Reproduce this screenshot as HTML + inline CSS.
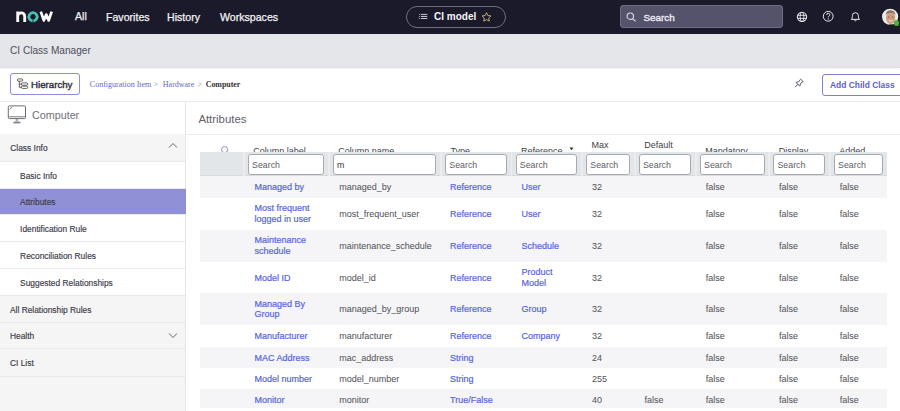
<!DOCTYPE html>
<html><head><meta charset="utf-8">
<style>
*{margin:0;padding:0;box-sizing:border-box}
html,body{width:900px;height:411px;overflow:hidden;background:#fff;font-family:"Liberation Sans",sans-serif;position:relative}
.a{position:absolute;white-space:nowrap;line-height:1}
#top{position:absolute;left:0;top:0;width:900px;height:34px;background:#1b1a2a}
#hdr{position:absolute;left:0;top:34px;width:900px;height:33.5px;background:#e5e6ea;border-bottom:1.2px solid #dfe0e4;box-shadow:0 1px 1.5px rgba(0,0,0,0.05);z-index:1}
#tb{position:absolute;left:0;top:67.5px;width:900px;height:33.5px;background:#fff}
.nav{color:#f2f2f5;font-size:10.6px;font-weight:normal;-webkit-text-stroke:0.25px #f2f2f5}
#side{position:absolute;left:0;top:101px;width:186px;height:310px;background:#f5f5f5;border-right:1px solid #e8e8ea}
.si{position:absolute;left:0;width:185px;border-bottom:1px solid #e6e6e8;color:#3c3c48;font-size:8.3px}
.si span{position:absolute;left:10px;line-height:1}
.sub span{left:20px}
.w{background:#fff}
.sel{background:#8f90d5}
</style></head><body>
<div id="top">
  <!-- now logo -->
  <svg class="a" style="left:0;top:0" width="60" height="34" viewBox="0 0 60 34">
    <path d="M17.7 22.1V11.6M17.7 16.3A3.5 3.5 0 0 1 24.7 16.3V22.1" fill="none" stroke="#fff" stroke-width="2.8"/>
    <path d="M32.6 21A4.15 4.15 0 1 1 33.4 21" fill="none" stroke="#47c1b1" stroke-width="2.8"/>
    <path d="M40.8 11.6L43.8 20.4L46.25 14.6L48.7 20.4L51.7 11.6" fill="none" stroke="#fff" stroke-width="2.7" stroke-linejoin="round"/>
  </svg>
  <div class="a nav" style="left:75px;top:11.4px">All</div>
  <div class="a nav" style="left:106px;top:11.6px">Favorites</div>
  <div class="a nav" style="left:167px;top:11.6px">History</div>
  <div class="a nav" style="left:220px;top:11.6px">Workspaces</div>
  <div class="a" style="left:406px;top:6px;width:100px;height:22px;border:1px solid #6f6d7e;border-radius:11px"></div>
  <svg class="a" style="left:418px;top:13px" width="10" height="7" viewBox="0 0 10 7"><path d="M0.9 1.4h1.3M0.9 3.45h1.3M0.9 5.5h1.3" stroke="#a9a9b4" stroke-width="0.95"/><path d="M3 1.4h6.3M3 3.45h6.3M3 5.5h6.3" stroke="#d4d4dc" stroke-width="0.95"/></svg>
  <div class="a" style="left:434px;top:11.5px;font-size:10px;font-weight:bold;color:#f4f4f8">CI model</div>
  <svg class="a" style="left:481px;top:12px" width="11" height="10" viewBox="0 0 24 23"><path d="M12 1.5l3.1 6.6 7.2.9-5.3 4.9 1.4 7.1L12 17.5l-6.4 3.5 1.4-7.1L1.7 9l7.2-.9z" fill="none" stroke="#c8b07a" stroke-width="2.2" stroke-linejoin="round"/></svg>
  <div class="a" style="left:620px;top:5px;width:163px;height:23px;background:#55526c;border:1px solid #6f6c86;border-radius:3px"></div>
  <svg class="a" style="left:626px;top:12px" width="11" height="10" viewBox="0 0 11 10"><circle cx="4.3" cy="4.2" r="3.2" fill="none" stroke="#dcdbe6" stroke-width="1.1"/><path d="M6.6 6.6L9.6 9.4" stroke="#dcdbe6" stroke-width="1.2"/></svg>
  <div class="a" style="left:643.5px;top:12.9px;font-size:9.9px;color:#eeedf5;-webkit-text-stroke:0.35px #eeedf5">Search</div>
  <!-- globe -->
  <svg class="a" style="left:796px;top:11px" width="12" height="12" viewBox="0 0 12 12"><circle cx="6" cy="5.85" r="4.6" fill="none" stroke="#e8e8ec" stroke-width="1.1"/><ellipse cx="6" cy="5.85" rx="1.9" ry="4.6" fill="none" stroke="#e8e8ec" stroke-width="0.9"/><path d="M1.6 4.3h8.8M1.6 7.4h8.8" stroke="#e8e8ec" stroke-width="0.9"/></svg>
  <svg class="a" style="left:822px;top:10px" width="12" height="12" viewBox="0 0 12 12"><circle cx="6.2" cy="6.3" r="4.9" fill="none" stroke="#e8e8ec" stroke-width="1"/><path d="M4.6 5Q4.6 3.4 6.2 3.4Q7.8 3.4 7.8 4.8Q7.8 5.7 7 6.1Q6.2 6.5 6.2 7.4" fill="none" stroke="#e8e8ec" stroke-width="0.95"/><circle cx="6.2" cy="8.9" r="0.6" fill="#e8e8ec"/></svg>
  <svg class="a" style="left:850px;top:10.8px" width="11" height="11" viewBox="0 0 11 11"><path d="M1.3 8.4Q2.4 7.5 2.4 5.6V4.7Q2.4 1.7 5.4 1.7Q8.4 1.7 8.4 4.7V5.6Q8.4 7.5 9.5 8.4Z" fill="none" stroke="#e8e8ec" stroke-width="1" stroke-linejoin="round"/><path d="M4.4 9.3Q5.4 10.5 6.4 9.3" fill="none" stroke="#e8e8ec" stroke-width="1"/></svg>
  <svg class="a" style="left:881px;top:8px" width="19" height="19" viewBox="0 0 19 19"><defs><clipPath id="avc"><circle cx="9.1" cy="8.8" r="8.1"/></clipPath></defs><circle cx="9.1" cy="8.8" r="8.1" fill="#eeeae8"/><g clip-path="url(#avc)"><ellipse cx="9.6" cy="10" rx="4.6" ry="6" fill="#cf9d84"/><path d="M4.6 7.5Q4.8 2.2 9.8 2.2Q14.6 2.4 14.4 7.6Q13.6 5 9.6 4.8Q5.8 5 4.6 7.5Z" fill="#8d735f"/><path d="M6.5 17.5Q9.6 14.8 13.5 16.6L14 19H6Z" fill="#3a3a40"/><ellipse cx="7.8" cy="9" rx="0.7" ry="0.5" fill="#6a4a3a"/><ellipse cx="11.6" cy="9" rx="0.7" ry="0.5" fill="#6a4a3a"/><path d="M7.6 12.4Q9.6 13.8 11.8 12.4" fill="none" stroke="#f4eeea" stroke-width="0.9"/></g></svg>
  <div class="a" style="left:893.6px;top:20.2px;width:5.6px;height:5.6px;border-radius:50%;background:#4cb52a"></div>
</div>
<div id="hdr"><div class="a" style="left:10px;top:12.2px;font-size:10.1px;color:#4c4f5a">CI Class Manager</div></div>
<div id="tb"></div>
<div class="a" style="left:185px;top:101px;width:1px;height:310px;background:#e6e6e9"></div>
<div class="a" style="left:0;top:101px;width:185px;height:310px;background:#f5f5f5"></div>
<div class="a" style="left:10.4px;top:73.3px;width:69.8px;height:21.4px;border:1px solid #8d8ddc;border-radius:3px;background:#fff"></div>
<svg class="a" style="left:16px;top:78px" width="13" height="11" viewBox="0 0 13 11"><rect x="1.4" y="0.9" width="5.4" height="2.3" rx="1.15" fill="none" stroke="#3a3a3a" stroke-width="0.8"/><path d="M3.3 3.2V9.3M3.3 6.1H5.3M3.3 9.3H5.3" fill="none" stroke="#3a3a3a" stroke-width="0.8"/><rect x="5.3" y="4.9" width="6.5" height="2.3" rx="1.15" fill="none" stroke="#3a3a3a" stroke-width="0.8"/><rect x="5.3" y="8.1" width="6.5" height="2.3" rx="1.15" fill="none" stroke="#3a3a3a" stroke-width="0.8"/></svg>
<div class="a" style="left:31px;top:79.69px;font-size:9.7px;color:#30303c;-webkit-text-stroke:0.4px #30303c;">Hierarchy</div>
<div class="a" style="left:89.8px;top:81.30px;font-size:8.0px;color:#6566c6;font-family:'Liberation Serif',serif;">Configuration Item</div>
<div class="a" style="left:153.5px;top:81.30px;font-size:8.0px;color:#8a8a8a;font-family:'Liberation Serif',serif;">&gt;</div>
<div class="a" style="left:162.8px;top:81.30px;font-size:8.0px;color:#6566c6;font-family:'Liberation Serif',serif;">Hardware</div>
<div class="a" style="left:197.5px;top:81.30px;font-size:8.0px;color:#8a8a8a;font-family:'Liberation Serif',serif;">&gt;</div>
<div class="a" style="left:205.7px;top:81.38px;font-size:7.9px;color:#333;font-family:'Liberation Serif',serif;font-weight:bold;">Computer</div>
<svg class="a" style="left:788px;top:74px" width="22" height="18" viewBox="0 0 22 18"><g transform="translate(10.7 9.5) rotate(45) scale(0.86)"><path d="M-1.6 -5.2L1.6 -5.2Q2.1 -5.2 2 -4.7L1.4 -1.3L2.9 0.7Q3.2 1.4 2.5 1.4L-2.5 1.4Q-3.2 1.4 -2.9 0.7L-1.4 -1.3L-2 -4.7Q-2.1 -5.2 -1.6 -5.2Z" fill="none" stroke="#4a4a5a" stroke-width="1" stroke-linejoin="round"/><path d="M0 1.4V5.6" stroke="#4a4a5a" stroke-width="1" stroke-linecap="round"/></g></svg>
<div class="a" style="left:822.4px;top:74px;width:100px;height:21.7px;border:1px solid #8080d8;border-radius:3px;background:#fff"></div>
<div class="a" style="left:830px;top:80.85px;font-size:8.45px;color:#5f60c8;font-weight:bold;">Add Child Class</div>
<div class="a" style="left:0;top:101px;width:185px;height:33.5px;background:#fff;border-bottom:1px solid #e6e6e9"></div>
<svg class="a" style="left:0;top:98px" width="30" height="30" viewBox="0 0 30 30"><rect x="8.3" y="7.9" width="17.2" height="12.7" rx="1" fill="none" stroke="#6e6e76" stroke-width="1"/><path d="M8.3 18.8H25.5" stroke="#6e6e76" stroke-width="0.9"/><path d="M9.6 11.4L12.4 8.8" stroke="#6e6e76" stroke-width="0.9"/><path d="M15.6 20.6H18.2V23.4H15.6Z" fill="#6e6e76" opacity="0.55"/><path d="M13.4 23.6H20.4V25.4H13.4Z" fill="#6e6e76" opacity="0.85"/></svg>
<div class="a" style="left:32px;top:110.20px;font-size:10.75px;color:#707078;">Computer</div>
<div class="a" style="left:0;top:134px;width:185px;height:28px;background:#f5f5f5;border-bottom:1px solid #e9e9ec"></div>
<div class="a" style="left:10.3px;top:144.29px;font-size:8.4px;color:#3a3a48;-webkit-text-stroke:0.15px #3a3a48">Class Info</div>
<svg class="a" style="left:168px;top:142.0px" width="10" height="7" viewBox="0 0 10 7"><path d="M1 5.5L5 1.5L9 5.5" fill="none" stroke="#555" stroke-width="0.9"/></svg>
<div class="a" style="left:0;top:162px;width:185px;height:27px;background:#fff;border-bottom:1px solid #e9e9ec"></div>
<div class="a" style="left:20.1px;top:171.79px;font-size:8.4px;color:#3a3a48;-webkit-text-stroke:0.15px #3a3a48">Basic Info</div>
<div class="a" style="left:0;top:189px;width:186px;height:26px;background:#8f90d5;border-bottom:1px solid #e9e9ec"></div>
<div class="a" style="left:20.1px;top:198.29px;font-size:8.4px;color:#3a3a48;-webkit-text-stroke:0.15px #3a3a48">Attributes</div>
<div class="a" style="left:0;top:215px;width:185px;height:27px;background:#fff;border-bottom:1px solid #e9e9ec"></div>
<div class="a" style="left:20.1px;top:224.79px;font-size:8.4px;color:#3a3a48;-webkit-text-stroke:0.15px #3a3a48">Identification Rule</div>
<div class="a" style="left:0;top:242px;width:185px;height:27px;background:#fff;border-bottom:1px solid #e9e9ec"></div>
<div class="a" style="left:20.1px;top:251.79px;font-size:8.4px;color:#3a3a48;-webkit-text-stroke:0.15px #3a3a48">Reconciliation Rules</div>
<div class="a" style="left:0;top:269px;width:185px;height:27px;background:#fff;border-bottom:1px solid #e9e9ec"></div>
<div class="a" style="left:20.1px;top:278.79px;font-size:8.4px;color:#3a3a48;-webkit-text-stroke:0.15px #3a3a48">Suggested Relationships</div>
<div class="a" style="left:0;top:296px;width:185px;height:26.5px;background:#f5f5f5;border-bottom:1px solid #e9e9ec"></div>
<div class="a" style="left:10px;top:305.54px;font-size:8.4px;color:#3a3a48;-webkit-text-stroke:0.15px #3a3a48">All Relationship Rules</div>
<div class="a" style="left:0;top:322.5px;width:185px;height:26.80000000000001px;background:#f5f5f5;border-bottom:1px solid #e9e9ec"></div>
<div class="a" style="left:10px;top:332.19px;font-size:8.4px;color:#3a3a48;-webkit-text-stroke:0.15px #3a3a48">Health</div>
<svg class="a" style="left:168px;top:331.9px" width="10" height="7" viewBox="0 0 10 7"><path d="M1 1.5L5 5.5L9 1.5" fill="none" stroke="#555" stroke-width="0.9"/></svg>
<div class="a" style="left:0;top:349.3px;width:185px;height:27.69999999999999px;background:#f5f5f5;border-bottom:1px solid #e9e9ec"></div>
<div class="a" style="left:10px;top:359.44px;font-size:8.4px;color:#3a3a48;-webkit-text-stroke:0.15px #3a3a48">CI List</div>
<div class="a" style="left:186px;top:134px;width:714px;height:1px;background:#ebebed"></div>
<div class="a" style="left:198.4px;top:113.58px;font-size:11.36px;color:#606068;">Attributes</div>
<div class="a" style="left:253.3px;top:146.98px;font-size:9px;color:#3f3f48;">Column label</div>
<div class="a" style="left:338.3px;top:146.98px;font-size:9px;color:#3f3f48;">Column name</div>
<div class="a" style="left:450.5px;top:146.98px;font-size:9px;color:#3f3f48;">Type</div>
<div class="a" style="left:521.0px;top:146.98px;font-size:9px;color:#3f3f48;">Reference</div>
<div class="a" style="left:591.5px;top:140.68px;font-size:9px;color:#3f3f48;">Max</div>
<div class="a" style="left:644.1999999999999px;top:140.68px;font-size:9px;color:#3f3f48;">Default</div>
<div class="a" style="left:705.3px;top:146.98px;font-size:9px;color:#3f3f48;">Mandatory</div>
<div class="a" style="left:778.6999999999999px;top:146.98px;font-size:9px;color:#3f3f48;">Display</div>
<div class="a" style="left:839.3px;top:146.98px;font-size:9px;color:#3f3f48;">Added</div>
<svg class="a" style="left:568.5px;top:147px" width="5" height="4" viewBox="0 0 5 4"><path d="M0.5 0.5H4.5L2.5 3.2Z" fill="#333"/></svg>
<svg class="a" style="left:219.5px;top:144.5px" width="10" height="10" viewBox="0 0 10 10"><circle cx="4.6" cy="4.6" r="3.1" fill="none" stroke="#7d78d6" stroke-width="0.85"/><path d="M6.9 6.9L9 9" stroke="#7d78d6" stroke-width="0.9"/></svg>
<div class="a" style="left:200px;top:151.9px;width:687.2px;height:24.4px;background:#e3e6e9;border-bottom:1px solid #d9dcdf"></div>
<div class="a" style="left:242.9px;top:151.9px;width:1.8px;height:24.4px;background:#eaecef"></div>
<div class="a" style="left:327.9px;top:151.9px;width:1.8px;height:24.4px;background:#eaecef"></div>
<div class="a" style="left:440.09999999999997px;top:151.9px;width:1.8px;height:24.4px;background:#eaecef"></div>
<div class="a" style="left:510.59999999999997px;top:151.9px;width:1.8px;height:24.4px;background:#eaecef"></div>
<div class="a" style="left:581.1px;top:151.9px;width:1.8px;height:24.4px;background:#eaecef"></div>
<div class="a" style="left:633.8px;top:151.9px;width:1.8px;height:24.4px;background:#eaecef"></div>
<div class="a" style="left:694.9px;top:151.9px;width:1.8px;height:24.4px;background:#eaecef"></div>
<div class="a" style="left:768.3px;top:151.9px;width:1.8px;height:24.4px;background:#eaecef"></div>
<div class="a" style="left:828.9px;top:151.9px;width:1.8px;height:24.4px;background:#eaecef"></div>
<div class="a" style="left:247.90px;top:153.6px;width:76.30px;height:21px;background:#fff;border:1.3px solid #a6a9ae;border-radius:2.8px"></div>
<div class="a" style="left:252.1px;top:160.55px;font-size:8.8px;color:#5e5e64;">Search</div>
<div class="a" style="left:332.90px;top:153.6px;width:103.50px;height:21px;background:#fff;border:1.3px solid #a6a9ae;border-radius:2.8px"></div>
<div class="a" style="left:337.09999999999997px;top:160.55px;font-size:8.8px;color:#333;">m</div>
<div class="a" style="left:445.10px;top:153.6px;width:61.80px;height:21px;background:#fff;border:1.3px solid #a6a9ae;border-radius:2.8px"></div>
<div class="a" style="left:449.29999999999995px;top:160.55px;font-size:8.8px;color:#5e5e64;">Search</div>
<div class="a" style="left:515.60px;top:153.6px;width:61.80px;height:21px;background:#fff;border:1.3px solid #a6a9ae;border-radius:2.8px"></div>
<div class="a" style="left:519.8px;top:160.55px;font-size:8.8px;color:#5e5e64;">Search</div>
<div class="a" style="left:586.10px;top:153.6px;width:44.00px;height:21px;background:#fff;border:1.3px solid #a6a9ae;border-radius:2.8px"></div>
<div class="a" style="left:590.3000000000001px;top:160.55px;font-size:8.8px;color:#5e5e64;">Search</div>
<div class="a" style="left:638.80px;top:153.6px;width:52.40px;height:21px;background:#fff;border:1.3px solid #a6a9ae;border-radius:2.8px"></div>
<div class="a" style="left:643.0px;top:160.55px;font-size:8.8px;color:#5e5e64;">Search</div>
<div class="a" style="left:699.90px;top:153.6px;width:64.70px;height:21px;background:#fff;border:1.3px solid #a6a9ae;border-radius:2.8px"></div>
<div class="a" style="left:704.1px;top:160.55px;font-size:8.8px;color:#5e5e64;">Search</div>
<div class="a" style="left:773.30px;top:153.6px;width:51.90px;height:21px;background:#fff;border:1.3px solid #a6a9ae;border-radius:2.8px"></div>
<div class="a" style="left:777.5px;top:160.55px;font-size:8.8px;color:#5e5e64;">Search</div>
<div class="a" style="left:833.90px;top:153.6px;width:49.00px;height:21px;background:#fff;border:1.3px solid #a6a9ae;border-radius:2.8px"></div>
<div class="a" style="left:838.1px;top:160.55px;font-size:8.8px;color:#5e5e64;">Search</div>
<div class="a" style="left:200px;top:176.3px;width:687.2px;height:22.00px;background:#f5f5f7"></div>
<div class="a" style="left:254.4px;top:183.38px;font-size:9px;color:#5865dd;-webkit-text-stroke:0.2px #5865dd;">Managed by</div>
<div class="a" style="left:339.3px;top:183.38px;font-size:9px;color:#55555c;-webkit-text-stroke:0.05px #555;">managed_by</div>
<div class="a" style="left:450.09999999999997px;top:183.38px;font-size:9px;color:#5865dd;-webkit-text-stroke:0.2px #5865dd;">Reference</div>
<div class="a" style="left:521.4px;top:183.38px;font-size:9px;color:#5865dd;-webkit-text-stroke:0.2px #5865dd;">User</div>
<div class="a" style="left:591.9000000000001px;top:183.38px;font-size:9px;color:#55555c;-webkit-text-stroke:0.05px #555;">32</div>
<div class="a" style="left:705.7px;top:183.38px;font-size:9px;color:#55555c;-webkit-text-stroke:0.05px #555;">false</div>
<div class="a" style="left:779.1px;top:183.38px;font-size:9px;color:#55555c;-webkit-text-stroke:0.05px #555;">false</div>
<div class="a" style="left:839.7px;top:183.38px;font-size:9px;color:#55555c;-webkit-text-stroke:0.05px #555;">false</div>
<div class="a" style="left:254.4px;top:204.33px;font-size:9px;color:#5865dd;-webkit-text-stroke:0.2px #5865dd;">Most frequent</div>
<div class="a" style="left:254.4px;top:215.13px;font-size:9px;color:#5865dd;-webkit-text-stroke:0.2px #5865dd;">logged in user</div>
<div class="a" style="left:339.3px;top:210.03px;font-size:9px;color:#55555c;-webkit-text-stroke:0.05px #555;">most_frequent_user</div>
<div class="a" style="left:450.09999999999997px;top:210.03px;font-size:9px;color:#5865dd;-webkit-text-stroke:0.2px #5865dd;">Reference</div>
<div class="a" style="left:521.4px;top:210.03px;font-size:9px;color:#5865dd;-webkit-text-stroke:0.2px #5865dd;">User</div>
<div class="a" style="left:591.9000000000001px;top:210.03px;font-size:9px;color:#55555c;-webkit-text-stroke:0.05px #555;">32</div>
<div class="a" style="left:705.7px;top:210.03px;font-size:9px;color:#55555c;-webkit-text-stroke:0.05px #555;">false</div>
<div class="a" style="left:779.1px;top:210.03px;font-size:9px;color:#55555c;-webkit-text-stroke:0.05px #555;">false</div>
<div class="a" style="left:839.7px;top:210.03px;font-size:9px;color:#55555c;-webkit-text-stroke:0.05px #555;">false</div>
<div class="a" style="left:200px;top:229.6px;width:687.2px;height:32.20px;background:#f5f5f7"></div>
<div class="a" style="left:254.4px;top:236.08px;font-size:9px;color:#5865dd;-webkit-text-stroke:0.2px #5865dd;">Maintenance</div>
<div class="a" style="left:254.4px;top:246.88px;font-size:9px;color:#5865dd;-webkit-text-stroke:0.2px #5865dd;">schedule</div>
<div class="a" style="left:339.3px;top:241.78px;font-size:9px;color:#55555c;-webkit-text-stroke:0.05px #555;">maintenance_schedule</div>
<div class="a" style="left:450.09999999999997px;top:241.78px;font-size:9px;color:#5865dd;-webkit-text-stroke:0.2px #5865dd;">Reference</div>
<div class="a" style="left:521.4px;top:241.78px;font-size:9px;color:#5865dd;-webkit-text-stroke:0.2px #5865dd;">Schedule</div>
<div class="a" style="left:591.9000000000001px;top:241.78px;font-size:9px;color:#55555c;-webkit-text-stroke:0.05px #555;">32</div>
<div class="a" style="left:705.7px;top:241.78px;font-size:9px;color:#55555c;-webkit-text-stroke:0.05px #555;">false</div>
<div class="a" style="left:779.1px;top:241.78px;font-size:9px;color:#55555c;-webkit-text-stroke:0.05px #555;">false</div>
<div class="a" style="left:839.7px;top:241.78px;font-size:9px;color:#55555c;-webkit-text-stroke:0.05px #555;">false</div>
<div class="a" style="left:254.4px;top:273.58px;font-size:9px;color:#5865dd;-webkit-text-stroke:0.2px #5865dd;">Model ID</div>
<div class="a" style="left:339.3px;top:273.58px;font-size:9px;color:#55555c;-webkit-text-stroke:0.05px #555;">model_id</div>
<div class="a" style="left:450.09999999999997px;top:273.58px;font-size:9px;color:#5865dd;-webkit-text-stroke:0.2px #5865dd;">Reference</div>
<div class="a" style="left:521.4px;top:267.88px;font-size:9px;color:#5865dd;-webkit-text-stroke:0.2px #5865dd;">Product</div>
<div class="a" style="left:521.4px;top:278.68px;font-size:9px;color:#5865dd;-webkit-text-stroke:0.2px #5865dd;">Model</div>
<div class="a" style="left:591.9000000000001px;top:273.58px;font-size:9px;color:#55555c;-webkit-text-stroke:0.05px #555;">32</div>
<div class="a" style="left:705.7px;top:273.58px;font-size:9px;color:#55555c;-webkit-text-stroke:0.05px #555;">false</div>
<div class="a" style="left:779.1px;top:273.58px;font-size:9px;color:#55555c;-webkit-text-stroke:0.05px #555;">false</div>
<div class="a" style="left:839.7px;top:273.58px;font-size:9px;color:#55555c;-webkit-text-stroke:0.05px #555;">false</div>
<div class="a" style="left:200px;top:293.2px;width:687.2px;height:32.10px;background:#f5f5f7"></div>
<div class="a" style="left:254.4px;top:299.63px;font-size:9px;color:#5865dd;-webkit-text-stroke:0.2px #5865dd;">Managed By</div>
<div class="a" style="left:254.4px;top:310.43px;font-size:9px;color:#5865dd;-webkit-text-stroke:0.2px #5865dd;">Group</div>
<div class="a" style="left:339.3px;top:305.33px;font-size:9px;color:#55555c;-webkit-text-stroke:0.05px #555;">managed_by_group</div>
<div class="a" style="left:450.09999999999997px;top:305.33px;font-size:9px;color:#5865dd;-webkit-text-stroke:0.2px #5865dd;">Reference</div>
<div class="a" style="left:521.4px;top:305.33px;font-size:9px;color:#5865dd;-webkit-text-stroke:0.2px #5865dd;">Group</div>
<div class="a" style="left:591.9000000000001px;top:305.33px;font-size:9px;color:#55555c;-webkit-text-stroke:0.05px #555;">32</div>
<div class="a" style="left:705.7px;top:305.33px;font-size:9px;color:#55555c;-webkit-text-stroke:0.05px #555;">false</div>
<div class="a" style="left:779.1px;top:305.33px;font-size:9px;color:#55555c;-webkit-text-stroke:0.05px #555;">false</div>
<div class="a" style="left:839.7px;top:305.33px;font-size:9px;color:#55555c;-webkit-text-stroke:0.05px #555;">false</div>
<div class="a" style="left:254.4px;top:332.13px;font-size:9px;color:#5865dd;-webkit-text-stroke:0.2px #5865dd;">Manufacturer</div>
<div class="a" style="left:339.3px;top:332.13px;font-size:9px;color:#55555c;-webkit-text-stroke:0.05px #555;">manufacturer</div>
<div class="a" style="left:450.09999999999997px;top:332.13px;font-size:9px;color:#5865dd;-webkit-text-stroke:0.2px #5865dd;">Reference</div>
<div class="a" style="left:521.4px;top:332.13px;font-size:9px;color:#5865dd;-webkit-text-stroke:0.2px #5865dd;">Company</div>
<div class="a" style="left:591.9000000000001px;top:332.13px;font-size:9px;color:#55555c;-webkit-text-stroke:0.05px #555;">32</div>
<div class="a" style="left:705.7px;top:332.13px;font-size:9px;color:#55555c;-webkit-text-stroke:0.05px #555;">false</div>
<div class="a" style="left:779.1px;top:332.13px;font-size:9px;color:#55555c;-webkit-text-stroke:0.05px #555;">false</div>
<div class="a" style="left:839.7px;top:332.13px;font-size:9px;color:#55555c;-webkit-text-stroke:0.05px #555;">false</div>
<div class="a" style="left:200px;top:346.8px;width:687.2px;height:21.50px;background:#f5f5f7"></div>
<div class="a" style="left:254.4px;top:353.63px;font-size:9px;color:#5865dd;-webkit-text-stroke:0.2px #5865dd;">MAC Address</div>
<div class="a" style="left:339.3px;top:353.63px;font-size:9px;color:#55555c;-webkit-text-stroke:0.05px #555;">mac_address</div>
<div class="a" style="left:450.09999999999997px;top:353.63px;font-size:9px;color:#5865dd;-webkit-text-stroke:0.2px #5865dd;">String</div>
<div class="a" style="left:591.9000000000001px;top:353.63px;font-size:9px;color:#55555c;-webkit-text-stroke:0.05px #555;">24</div>
<div class="a" style="left:705.7px;top:353.63px;font-size:9px;color:#55555c;-webkit-text-stroke:0.05px #555;">false</div>
<div class="a" style="left:779.1px;top:353.63px;font-size:9px;color:#55555c;-webkit-text-stroke:0.05px #555;">false</div>
<div class="a" style="left:839.7px;top:353.63px;font-size:9px;color:#55555c;-webkit-text-stroke:0.05px #555;">false</div>
<div class="a" style="left:254.4px;top:374.88px;font-size:9px;color:#5865dd;-webkit-text-stroke:0.2px #5865dd;">Model number</div>
<div class="a" style="left:339.3px;top:374.88px;font-size:9px;color:#55555c;-webkit-text-stroke:0.05px #555;">model_number</div>
<div class="a" style="left:450.09999999999997px;top:374.88px;font-size:9px;color:#5865dd;-webkit-text-stroke:0.2px #5865dd;">String</div>
<div class="a" style="left:591.9000000000001px;top:374.88px;font-size:9px;color:#55555c;-webkit-text-stroke:0.05px #555;">255</div>
<div class="a" style="left:705.7px;top:374.88px;font-size:9px;color:#55555c;-webkit-text-stroke:0.05px #555;">false</div>
<div class="a" style="left:779.1px;top:374.88px;font-size:9px;color:#55555c;-webkit-text-stroke:0.05px #555;">false</div>
<div class="a" style="left:839.7px;top:374.88px;font-size:9px;color:#55555c;-webkit-text-stroke:0.05px #555;">false</div>
<div class="a" style="left:200px;top:389.3px;width:687.2px;height:18.70px;background:#f5f5f7"></div>
<div class="a" style="left:254.4px;top:395.73px;font-size:9px;color:#5865dd;-webkit-text-stroke:0.2px #5865dd;">Monitor</div>
<div class="a" style="left:339.3px;top:395.73px;font-size:9px;color:#55555c;-webkit-text-stroke:0.05px #555;">monitor</div>
<div class="a" style="left:450.09999999999997px;top:395.73px;font-size:9px;color:#5865dd;-webkit-text-stroke:0.2px #5865dd;">True/False</div>
<div class="a" style="left:591.9000000000001px;top:395.73px;font-size:9px;color:#55555c;-webkit-text-stroke:0.05px #555;">40</div>
<div class="a" style="left:644.6px;top:395.73px;font-size:9px;color:#55555c;-webkit-text-stroke:0.05px #555;">false</div>
<div class="a" style="left:705.7px;top:395.73px;font-size:9px;color:#55555c;-webkit-text-stroke:0.05px #555;">false</div>
<div class="a" style="left:779.1px;top:395.73px;font-size:9px;color:#55555c;-webkit-text-stroke:0.05px #555;">false</div>
<div class="a" style="left:839.7px;top:395.73px;font-size:9px;color:#55555c;-webkit-text-stroke:0.05px #555;">false</div>

<div class="a" style="left:0;top:100.6px;width:900px;height:1.2px;background:#e8eaee"></div>
</body></html>
